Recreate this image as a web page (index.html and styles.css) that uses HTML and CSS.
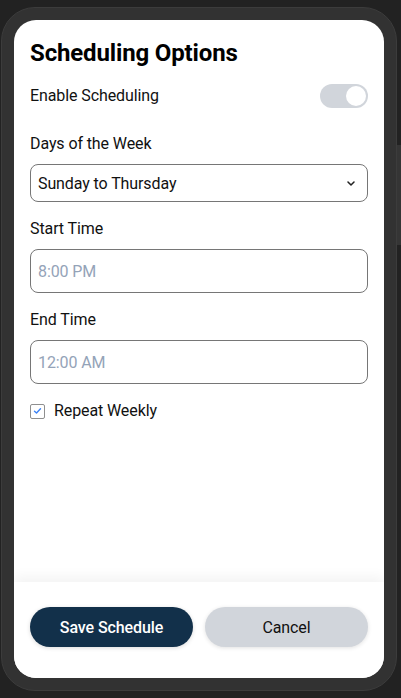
FILE: index.html
```html
<!DOCTYPE html>
<html lang="en">
<head>
<meta charset="utf-8">
<title>Scheduling Options</title>
<link rel="stylesheet" href="styles.css">
</head>
<body>
<div class="device">
  <div class="side-button"></div>
  <div class="card">
    <div class="content">
      <h1 class="title">Scheduling Options</h1>
      <div class="toggle-row">
        <span class="text">Enable Scheduling</span>
        <span class="toggle"><span class="knob"></span></span>
      </div>
      <div class="group">
        <div class="label">Days of the Week</div>
        <div class="field select">
          <span>Sunday to Thursday</span>
          <svg class="chevron" width="8" height="5" viewBox="0 0 8 5"><polyline points="1,1 4,4 7,1" fill="none" stroke="#222" stroke-width="1.5" stroke-linecap="round" stroke-linejoin="round"/></svg>
        </div>
      </div>
      <div class="group">
        <div class="label">Start Time</div>
        <div class="field input"><span class="placeholder">8:00 PM</span></div>
      </div>
      <div class="group">
        <div class="label">End Time</div>
        <div class="field input"><span class="placeholder">12:00 AM</span></div>
      </div>
      <div class="check-row">
        <span class="checkbox">
          <svg width="9" height="8" viewBox="0 0 9 8"><polyline points="1.5,4.2 3.5,6 7.5,1.8" fill="none" stroke="#3b82f6" stroke-width="1.4" stroke-linecap="round" stroke-linejoin="round"/></svg>
        </span>
        <span class="text">Repeat Weekly</span>
      </div>
    </div>
    <div class="footer">
      <button class="btn btn-primary">Save Schedule</button>
      <button class="btn btn-secondary">Cancel</button>
    </div>
  </div>
</div>
</body>
</html>
```
FILE: styles.css
```css
* { box-sizing: border-box; }
html, body { margin: 0; height: 100%; }
body {
  background: #222222;
  font-family: Roboto, "Noto Sans", "Liberation Sans", sans-serif;
  color: #111111;
  padding: 7px 0 0 1px;
}
.device {
  position: relative;
  width: 396px;
  height: 684px;
  background: #323232;
  border: 1px solid #3c3c3c;
  border-radius: 34px;
  padding: 12px;
}
.side-button {
  position: absolute;
  right: -5px;
  top: 137px;
  width: 4px;
  height: 100px;
  background: #353535;
}
.card {
  height: 100%;
  background: #ffffff;
  border-radius: 22px;
  overflow: hidden;
  display: flex;
  flex-direction: column;
}
.content {
  flex: 1;
  padding: 17px 16px 0 16px;
}
.title {
  margin: 0 0 15px 0;
  font-size: 24px;
  line-height: 32px;
  font-weight: 700;
  color: #000000;
  letter-spacing: -0.15px;
}
.text { font-size: 16px; line-height: 24px; letter-spacing: -0.1px; }
.toggle-row {
  display: flex;
  justify-content: space-between;
  align-items: center;
  height: 24px;
  margin-bottom: 24px;
}
.toggle {
  width: 48px;
  height: 24px;
  border-radius: 12px;
  background: #d1d5db;
  display: flex;
  justify-content: flex-end;
  align-items: center;
  padding: 2px;
}
.knob {
  width: 20px;
  height: 20px;
  border-radius: 50%;
  background: #ffffff;
}
.group { margin-bottom: 15px; }
.label {
  font-size: 16px;
  line-height: 24px;
  margin-bottom: 8px;
  letter-spacing: -0.1px;
}
.field {
  border: 1px solid #767676;
  border-radius: 8px;
  padding: 0 12px 0 7px;
  display: flex;
  align-items: center;
  font-size: 16px;
  letter-spacing: -0.1px;
}
.select { height: 38px; justify-content: space-between; color: #111; }
.chevron { display: block; }
.input { height: 44px; }
.placeholder { color: #94a3b8; }
.check-row {
  display: flex;
  align-items: center;
  gap: 9px;
  height: 24px;
}
.checkbox {
  width: 15px;
  height: 15px;
  border: 1px solid #8f8f8f;
  border-radius: 2px;
  display: flex;
  align-items: center;
  justify-content: center;
  background: #fff;
}
.checkbox svg { display: block; }
.footer {
  height: 96px;
  background: #ffffff;
  box-shadow: 0 -5px 12px rgba(0, 0, 0, 0.05);
  display: flex;
  gap: 12px;
  padding: 25px 16px 0 16px;
}
.btn {
  flex: 1;
  height: 40px;
  border: none;
  border-radius: 20px;
  font-family: Roboto, "Noto Sans", "Liberation Sans", sans-serif;
  font-size: 16px;
  letter-spacing: -0.1px;
  cursor: pointer;
}
.btn-primary {
  background: #12304a;
  color: #ffffff;
  font-weight: 500;
  box-shadow: 0 1px 4px rgba(0, 0, 0, 0.15);
}
.btn-secondary {
  background: #d1d5db;
  color: #111111;
  font-weight: 400;
  box-shadow: 0 1px 4px rgba(0, 0, 0, 0.12);
}
```
